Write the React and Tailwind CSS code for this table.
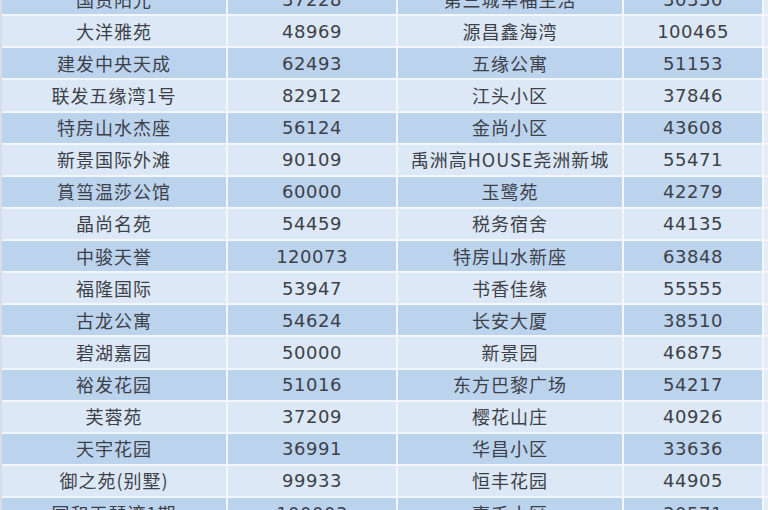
import React from "react";

// 小区房价表 (partial view, top and bottom rows are cut off)
const rows = [
    ["国贸阳光", "37228", "第三城幸福生活", "30330"],
    ["大洋雅苑", "48969", "源昌鑫海湾", "100465"],
    ["建发中央天成", "62493", "五缘公寓", "51153"],
    ["联发五缘湾1号", "82912", "江头小区", "37846"],
    ["特房山水杰座", "56124", "金尚小区", "43608"],
    ["新景国际外滩", "90109", "禹洲高HOUSE尧洲新城", "55471"],
    ["篔筜温莎公馆", "60000", "玉鹭苑", "42279"],
    ["晶尚名苑", "54459", "税务宿舍", "44135"],
    ["中骏天誉", "120073", "特房山水新座", "63848"],
    ["福隆国际", "53947", "书香佳缘", "55555"],
    ["古龙公寓", "54624", "长安大厦", "38510"],
    ["碧湖嘉园", "50000", "新景园", "46875"],
    ["裕发花园", "51016", "东方巴黎广场", "54217"],
    ["芙蓉苑", "37209", "樱花山庄", "40926"],
    ["天宇花园", "36991", "华昌小区", "33636"],
    ["御之苑(别墅)", "99933", "恒丰花园", "44905"],
    ["国和天琴湾1期", "100003", "嘉禾小区", "30571"],
];

const nameCls =
    "flex items-center justify-center border-r-2 border-[#f3f7fc] [font-family:'Noto_Sans_CJK_SC','Noto_Sans',sans-serif] text-[18px] tracking-[1px] text-[#3c4149] whitespace-nowrap";
const numCls =
    "flex items-center justify-center border-r-2 border-[#f3f7fc] [font-family:'DejaVu_Sans','Noto_Sans',sans-serif] text-[18px] tracking-[0.5px] text-[#3c4149]";

const Row = ({ row, idx }) => (
    <div
        className={
            "grid grid-cols-[226px_170px_226px_140px_1fr] h-[32.13px] border-b-2 border-[#f3f7fc] " +
            (idx % 2 === 1 ? "bg-[#dce8f5]" : "bg-[#bcd3ee]")
        }
    >
        <div className={nameCls}>{row[0]}</div>
        <div className={numCls}>{row[1]}</div>
        <div className={nameCls}>{row[2]}</div>
        <div className={numCls}>{row[3]}</div>
        <div className="bg-[#e4edf7]" />
    </div>
);

export default function App() {
    return (
        <div className="w-[768px] h-[510px] overflow-hidden bg-[#f3f7fc]">
            <div className="-mt-[16px] border-l-2 border-[#d9dde6]">
                {rows.map((row, idx) => (
                    <Row key={idx} row={row} idx={idx} />
                ))}
            </div>
        </div>
    );
}
